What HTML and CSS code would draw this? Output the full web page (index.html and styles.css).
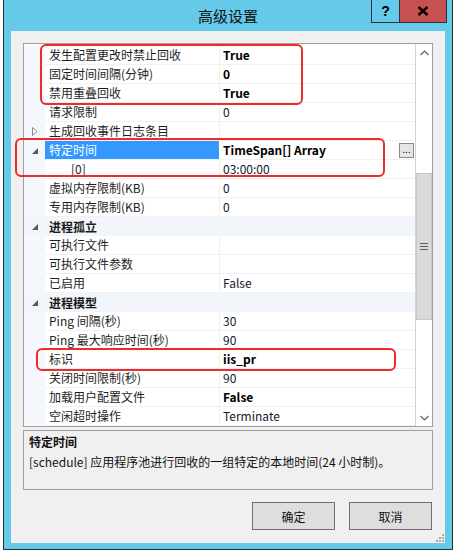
FILE: index.html
```html
<!DOCTYPE html>
<html lang="zh-CN">
<head>
<meta charset="utf-8">
<title>高级设置</title>
<link rel="stylesheet" href="styles.css">
</head>
<body>
<div class="window">
  <div class="titlebar">
    <span class="title">高级设置</span>
    <div class="caption-btns">
      <div class="cap help">?</div>
      <div class="cap close">
        <svg width="12" height="10" viewBox="0 0 12 10"><path d="M1.5 1 L10.5 9 M10.5 1 L1.5 9" stroke="#000" stroke-width="2.4" fill="none"/></svg>
      </div>
    </div>
  </div>
  <div class="client">
    <div class="grid">
      <div class="rows">
        <div class="row"><div class="gut"></div><div class="name">发生配置更改时禁止回收</div><div class="val b">True</div></div>
        <div class="row"><div class="gut"></div><div class="name">固定时间间隔(分钟)</div><div class="val b">0</div></div>
        <div class="row"><div class="gut"></div><div class="name">禁用重叠回收</div><div class="val b">True</div></div>
        <div class="row"><div class="gut"></div><div class="name">请求限制</div><div class="val">0</div></div>
        <div class="row"><div class="gut"><svg class="tri-open" width="6" height="9" viewBox="0 0 6 9"><path d="M0.5 0.5 L5 4.5 L0.5 8.5 Z" fill="#fff" stroke="#8a8a8a" stroke-width="1"/></svg></div><div class="name">生成回收事件日志条目</div><div class="val"></div></div>
        <div class="row"><div class="gut"><svg width="6" height="6" viewBox="0 0 6 6"><path d="M6 0 L6 6 L0 6 Z" fill="#595959"/></svg></div><div class="name sel">特定时间</div><div class="val b">TimeSpan[] Array<span class="ellipsis">...</span></div></div>
        <div class="row"><div class="gut"></div><div class="name sub">[0]</div><div class="val">03:00:00</div></div>
        <div class="row"><div class="gut"></div><div class="name">虚拟内存限制(KB)</div><div class="val">0</div></div>
        <div class="row"><div class="gut"></div><div class="name">专用内存限制(KB)</div><div class="val">0</div></div>
        <div class="row cat"><div class="gut"><svg width="6" height="6" viewBox="0 0 6 6"><path d="M6 0 L6 6 L0 6 Z" fill="#595959"/></svg></div><div class="catname">进程孤立</div></div>
        <div class="row"><div class="gut"></div><div class="name">可执行文件</div><div class="val"></div></div>
        <div class="row"><div class="gut"></div><div class="name">可执行文件参数</div><div class="val"></div></div>
        <div class="row"><div class="gut"></div><div class="name">已启用</div><div class="val">False</div></div>
        <div class="row cat"><div class="gut"><svg width="6" height="6" viewBox="0 0 6 6"><path d="M6 0 L6 6 L0 6 Z" fill="#595959"/></svg></div><div class="catname">进程模型</div></div>
        <div class="row"><div class="gut"></div><div class="name">Ping 间隔(秒)</div><div class="val">30</div></div>
        <div class="row"><div class="gut"></div><div class="name">Ping 最大响应时间(秒)</div><div class="val">90</div></div>
        <div class="row"><div class="gut"></div><div class="name">标识</div><div class="val b">iis_pr</div></div>
        <div class="row"><div class="gut"></div><div class="name">关闭时间限制(秒)</div><div class="val">90</div></div>
        <div class="row"><div class="gut"></div><div class="name">加载用户配置文件</div><div class="val b">False</div></div>
        <div class="row"><div class="gut"></div><div class="name">空闲超时操作</div><div class="val">Terminate</div></div>
      </div>
      <div class="scrollbar">
        <div class="arrow"><svg width="9" height="6" viewBox="0 0 9 6"><path d="M0.5 5 L4.5 1 L8.5 5" stroke="#606060" stroke-width="1.2" fill="none"/></svg></div>
        <div class="track-top"></div>
        <div class="thumb"><svg width="8" height="7" viewBox="0 0 8 7"><path d="M0 0.5 H8 M0 3.5 H8 M0 6.5 H8" stroke="#606060" stroke-width="1"/></svg></div>
        <div class="track-bottom"></div>
        <div class="arrow"><svg width="9" height="6" viewBox="0 0 9 6"><path d="M0.5 1 L4.5 5 L8.5 1" stroke="#606060" stroke-width="1.2" fill="none"/></svg></div>
      </div>
    </div>
    <div class="desc">
      <div class="desc-title">特定时间</div>
      <div class="desc-text">[schedule] 应用程序池进行回收的一组特定的本地时间(24 小时制)。</div>
    </div>
    <div class="buttons">
      <div class="btn">确定</div>
      <div class="btn">取消</div>
    </div>
    <svg class="grip" width="9" height="9" viewBox="0 0 9 9"><g fill="#a8a8a8"><rect x="7" y="1" width="2" height="2"/><rect x="4" y="4" width="2" height="2"/><rect x="7" y="4" width="2" height="2"/><rect x="1" y="7" width="2" height="2"/><rect x="4" y="7" width="2" height="2"/><rect x="7" y="7" width="2" height="2"/></g></svg>
    <div class="mark mark1"></div>
    <div class="mark mark2"></div>
    <div class="mark mark3"></div>
  </div>
</div>
</body>
</html>
```
FILE: styles.css
```css
* { box-sizing: border-box; }
html, body { margin: 0; padding: 0; background: #fff; }
body {
  font-family: "Microsoft YaHei UI", "Noto Sans CJK SC", sans-serif;
  font-size: 12px;
  color: #1a1a1a;
}
.window {
  position: relative;
  margin-left: 3px;
  width: 450px;
  height: 550px;
  background: #65c9ea;
  border: 1px solid #2b2b2b;
  border-top: none;
  padding: 0 7px 6px 7px;
  display: flex;
  flex-direction: column;
}
.titlebar {
  height: 31px;
  display: flex;
  align-items: center;
  justify-content: center;
}
.title {
  font-size: 15px;
  color: #111;
  line-height: 20px;
  margin-top: 0px;
}
.caption-btns {
  position: absolute;
  top: 0;
  right: 5px;
  display: flex;
}
.cap {
  height: 23px;
  border: 1px solid #303030;
  border-top: none;
  display: flex;
  align-items: center;
  justify-content: center;
}
.help {
  width: 29px;
  background: #65c9ea;
  font-weight: bold;
  font-size: 14px;
  font-family: "Liberation Sans", sans-serif;
  color: #000;
}
.close {
  width: 47px;
  background: #c75050;
  border-left: none;
}
.client {
  position: relative;
  flex: 1;
  background: #f0f0f0;
  padding: 12px 12px 0 12px;
  display: flex;
  flex-direction: column;
}
.grid {
  height: 384px;
  border: 1px solid #a0a0a0;
  background: #fff;
  display: flex;
}
.rows {
  width: 391px;
  padding-top: 2px;
  display: flex;
  flex-direction: column;
}
.row {
  height: 19px;
  display: flex;
}
.gut {
  width: 21px;
  background: #f4f7fc;
  display: flex;
  align-items: center;
  justify-content: center;
  padding-left: 1px;
}
.name {
  width: 175px;
  border-right: 1px solid #f0f0f0;
  border-bottom: 1px solid #f0f0f0;
  padding-left: 4px;
  display: flex;
  align-items: center;
  white-space: nowrap;
  line-height: 18px;
  color: #1e1e1e;
}
.name.sel {
  background: #3399ff;
  color: #fff;
  border-right-color: #fff;
}
.name.sub { padding-left: 26px; }
.val {
  width: 195px;
  border-bottom: 1px solid #f0f0f0;
  padding-left: 3px;
  display: flex;
  align-items: center;
  white-space: nowrap;
  line-height: 18px;
  color: #10182a;
}
.val.b { font-weight: bold; color: #000; }
.ellipsis {
  margin-left: auto;
  margin-right: 1px;
  width: 15px;
  height: 15px;
  border: 1px solid #8a8a8a;
  background: #e6e6e6;
  font-weight: normal;
  font-size: 10px;
  line-height: 10px;
  display: flex;
  align-items: center;
  justify-content: center;
  padding-bottom: 2px;
}
.row.cat { background: #f2f5fa; }
.row.cat .gut { background: #f2f5fa; }
.catname {
  flex: 1;
  padding-left: 4px;
  font-weight: bold;
  display: flex;
  align-items: center;
  color: #1a1a1a;
}
.scrollbar {
  width: 17px;
  border-left: 1px solid #d4d4d4;
  background: #fff;
  display: flex;
  flex-direction: column;
}
.arrow {
  height: 17px;
  display: flex;
  align-items: center;
  justify-content: center;
}
.track-top { height: 112px; }
.thumb {
  height: 147px;
  background: #dadada;
  border: 1px solid #c8c8c8;
  display: flex;
  align-items: center;
  justify-content: center;
}
.track-bottom { flex: 1; }
.desc {
  margin-top: 3px;
  height: 60px;
  border: 1px solid #a0a0a0;
  padding: 1px 5px;
  line-height: 20px;
}
.desc-title { font-weight: bold; color: #111; }
.desc-text { color: #111; }
.buttons {
  margin-top: 12px;
  display: flex;
  justify-content: flex-end;
  gap: 14px;
  padding-right: 1px;
}
.btn {
  width: 83px;
  height: 28px;
  border: 1px solid #707070;
  background: #dedede;
  display: flex;
  align-items: center;
  justify-content: center;
  color: #111;
}
.grip {
  position: absolute;
  right: 1px;
  bottom: 1px;
}
.mark {
  position: absolute;
  border: 2px solid #f02a2a;
  border-radius: 6px;
}
.mark1 { left: 29px; top: 13px; width: 263px; height: 61px; }
.mark2 { left: 4px; top: 107px; width: 370px; height: 39px; }
.mark3 { left: 25px; top: 317px; width: 360px; height: 23px; }
```
